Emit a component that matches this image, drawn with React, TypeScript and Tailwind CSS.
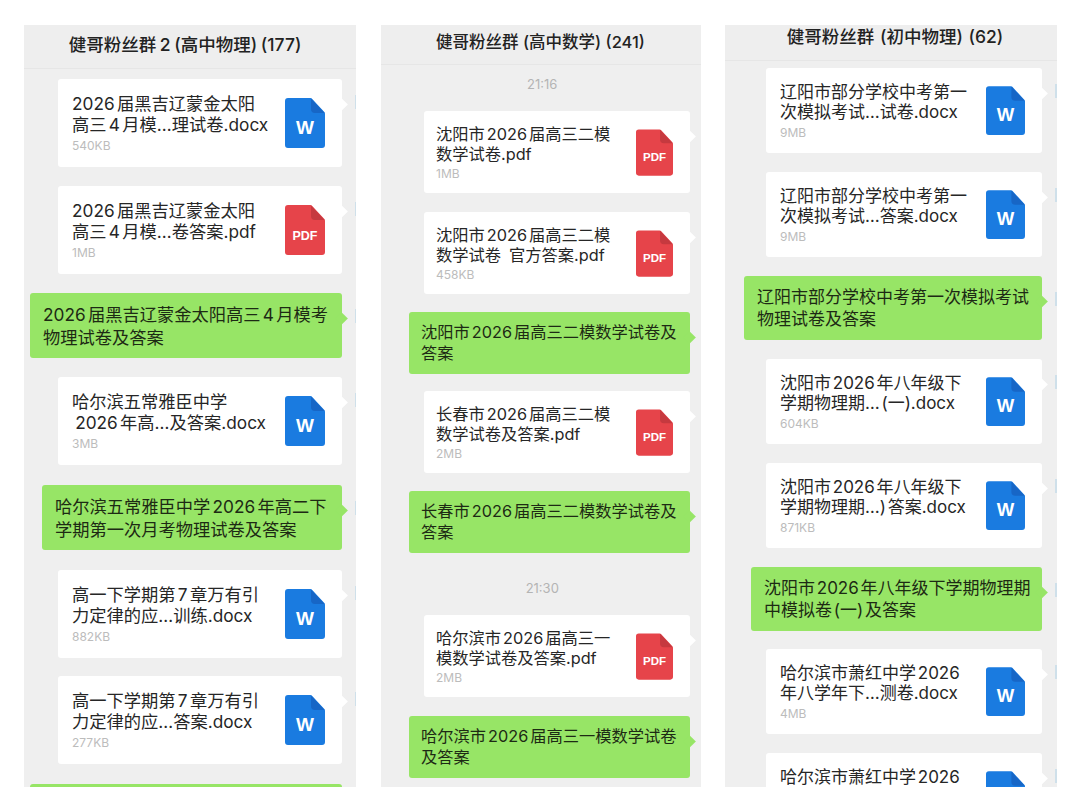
const FONT = "font-['Inter','Noto_Sans_CJK_SC',sans-serif]";

type Item =
  | { kind: "file"; lines: string[]; size: string; icon: "word" | "pdf"; mt: string; textHeight?: string }
  | { kind: "text"; lines: string[]; width: string; mt: string }
  | { kind: "time"; label: string; mt: string };

interface PanelStyle {
  width: string;
  headerHeight: string;
  titleSize: string;
  listPad: string;
  fileClass: string;
  fileWidth: string;
  fileText: string;
  sizeMt: string;
  textClass: string;
  iconClass: string;
}

function DocIcon({ type, className }: { type: "word" | "pdf"; className: string }) {
  const isWord = type === "word";
  return (
    <svg viewBox="0 0 40 50" className={className}>
      <path
        d="M3 0H25.5a2 2 0 0 1 1.5.7L39.3 14a2.5 2.5 0 0 1 .7 1.7V47a3 3 0 0 1-3 3H3a3 3 0 0 1-3-3V3a3 3 0 0 1 3-3Z"
        fill={isWord ? "#1a7be0" : "#e6444a"}
      />
      <path d="M26 .5L39.6 15H30a4 4 0 0 1-4-4Z" fill={isWord ? "#1766c6" : "#c6393f"} />
      <text
        x="20"
        y={isWord ? 36 : 34.5}
        textAnchor="middle"
        fill="#fff"
        fontFamily="Liberation Sans, sans-serif"
        fontWeight="700"
        fontSize={isWord ? 19 : 12.5}
      >
        {isWord ? "W" : "PDF"}
      </text>
    </svg>
  );
}

function Tail({ color }: { color: string }) {
  return (
    <>
      <div className={`absolute right-[-4px] top-[21px] h-[9px] w-[9px] rotate-45 ${color}`} />
      <div className="absolute right-[-15px] top-[16px] h-[14px] w-[2px] bg-[#cfe0ea]" />
    </>
  );
}

function Panel({ title, style, items }: { title: string; style: PanelStyle; items: Item[] }) {
  return (
    <div className={`h-[762px] shrink-0 overflow-hidden bg-[#efefef] ${style.width}`}>
      <div
        className={`flex items-center justify-center border-b border-[#e6e6e6] bg-[#eeeeee] font-medium text-[#222] ${style.headerHeight} ${style.titleSize}`}
      >
        {title}
      </div>
      <div className={`flex flex-col items-end ${style.listPad}`}>
        {items.map((item, i) => {
          if (item.kind === "time") {
            return (
              <div key={i} className={`w-full pl-[14px] text-center text-[13px] leading-[18px] text-[#b4b4b4] ${item.mt}`}>
                {item.label}
              </div>
            );
          }
          if (item.kind === "text") {
            return (
              <div
                key={i}
                className={`relative rounded-[3px] bg-[#97e566] text-[#1d2a14] ${style.textClass} ${item.width} ${item.mt}`}
              >
                {item.lines.map((line) => (
                  <div key={line} className="whitespace-nowrap">{line}</div>
                ))}
                <Tail color="bg-[#97e566]" />
              </div>
            );
          }
          return (
            <div
              key={i}
              className={`relative flex items-center justify-between rounded-[3px] bg-white pr-[17px] ${style.fileClass} ${style.fileWidth} ${item.mt}`}
            >
              <div className={`text-[#262626] ${style.fileText} ${item.textHeight ?? ""}`}>
                {item.lines.map((line) => (
                  <div key={line} className="whitespace-nowrap">{line}</div>
                ))}
                {item.size && (
                  <div className={`text-[12px] leading-[14px] text-[#bcbcbc] ${style.sizeMt}`}>{item.size}</div>
                )}
              </div>
              <DocIcon type={item.icon} className={style.iconClass} />
              <Tail color="bg-white" />
            </div>
          );
        })}
      </div>
    </div>
  );
}

const first: PanelStyle = {
  width: "w-[332px]",
  headerHeight: "h-[44px] pb-[2px] pr-[10px] [word-spacing:-1px]",
  titleSize: "text-[17.5px]",
  listPad: "pr-[14px] [word-spacing:-2.5px]",
  fileClass: "h-[88px] pl-[14px]",
  fileWidth: "w-[284px]",
  fileText: "text-[17.25px] leading-[21px]",
  sizeMt: "mt-[4px]",
  textClass: "py-[9.5px] pl-[13px] text-[17.25px] leading-[23px]",
  iconClass: "h-[50px] w-[40px] shrink-0",
};

const second: PanelStyle = {
  width: "w-[320px]",
  headerHeight: "h-[40px] pb-[5px]",
  titleSize: "text-[16.5px]",
  listPad: "pr-[10.5px] [word-spacing:-2.5px]",
  fileClass: "h-[82px] pl-[12px]",
  fileWidth: "w-[266px]",
  fileText: "text-[16.25px] leading-[20px]",
  sizeMt: "mt-[3px]",
  textClass: "py-[10px] pl-[12px] text-[16.25px] leading-[21px]",
  iconClass: "h-[47px] w-[37px] shrink-0",
};

const third: PanelStyle = {
  width: "w-[332px]",
  headerHeight: "h-[36px] pb-[10px] pl-[8px] [word-spacing:1px]",
  titleSize: "text-[17.5px]",
  listPad: "pr-[15px] [word-spacing:-3px]",
  fileClass: "h-[85px] pl-[14px]",
  fileWidth: "w-[276px]",
  fileText: "text-[17px] leading-[20px]",
  sizeMt: "mt-[4px]",
  textClass: "py-[10px] pl-[13px] text-[17px] leading-[22px]",
  iconClass: "h-[49px] w-[39px] shrink-0",
};

const firstItems: Item[] = [
  { kind: "file", lines: ["2026 届黑吉辽蒙金太阳", "高三 4 月模…理试卷.docx"], size: "540KB", icon: "word", mt: "mt-[10px]" },
  { kind: "file", lines: ["2026 届黑吉辽蒙金太阳", "高三 4 月模…卷答案.pdf"], size: "1MB", icon: "pdf", mt: "mt-[19px]" },
  { kind: "text", lines: ["2026 届黑吉辽蒙金太阳高三 4 月模考", "物理试卷及答案"], width: "w-[312px]", mt: "mt-[19px]" },
  { kind: "file", lines: ["哈尔滨五常雅臣中学", "\u20092026 年高…及答案.docx"], size: "3MB", icon: "word", mt: "mt-[19px]" },
  { kind: "text", lines: ["哈尔滨五常雅臣中学 2026 年高二下", "学期第一次月考物理试卷及答案"], width: "w-[300px]", mt: "mt-[20px]" },
  { kind: "file", lines: ["高一下学期第 7 章万有引", "力定律的应…训练.docx"], size: "882KB", icon: "word", mt: "mt-[20px]" },
  { kind: "file", lines: ["高一下学期第 7 章万有引", "力定律的应…答案.docx"], size: "277KB", icon: "word", mt: "mt-[18px]" },
  { kind: "text", lines: [], width: "w-[312px]", mt: "mt-[20px]" },
];

const secondItems: Item[] = [
  { kind: "time", label: "21:16", mt: "mt-[10px]" },
  { kind: "file", lines: ["沈阳市 2026 届高三二模", "数学试卷.pdf"], size: "1MB", icon: "pdf", mt: "mt-[18px]" },
  { kind: "file", lines: ["沈阳市 2026 届高三二模", "数学试卷\u2002官方答案.pdf"], size: "458KB", icon: "pdf", mt: "mt-[19px]" },
  { kind: "text", lines: ["沈阳市 2026 届高三二模数学试卷及", "答案"], width: "w-[281px]", mt: "mt-[18px]" },
  { kind: "file", lines: ["长春市 2026 届高三二模", "数学试卷及答案.pdf"], size: "2MB", icon: "pdf", mt: "mt-[17px]" },
  { kind: "text", lines: ["长春市 2026 届高三二模数学试卷及", "答案"], width: "w-[281px]", mt: "mt-[18px]" },
  { kind: "time", label: "21:30", mt: "mt-[26px]" },
  { kind: "file", lines: ["哈尔滨市 2026 届高三一", "模数学试卷及答案.pdf"], size: "2MB", icon: "pdf", mt: "mt-[18px]" },
  { kind: "text", lines: ["哈尔滨市 2026 届高三一模数学试卷", "及答案"], width: "w-[281px]", mt: "mt-[19px]" },
];

const thirdItems: Item[] = [
  { kind: "file", lines: ["辽阳市部分学校中考第一", "次模拟考试…试卷.docx"], size: "9MB", icon: "word", mt: "mt-[7px]" },
  { kind: "file", lines: ["辽阳市部分学校中考第一", "次模拟考试…答案.docx"], size: "9MB", icon: "word", mt: "mt-[19px]" },
  { kind: "text", lines: ["辽阳市部分学校中考第一次模拟考试", "物理试卷及答案"], width: "w-[298px]", mt: "mt-[19px]" },
  { kind: "file", lines: ["沈阳市 2026 年八年级下", "学期物理期… (一).docx"], size: "604KB", icon: "word", mt: "mt-[19px]" },
  { kind: "file", lines: ["沈阳市 2026 年八年级下", "学期物理期…) 答案.docx"], size: "871KB", icon: "word", mt: "mt-[19px]" },
  { kind: "text", lines: ["沈阳市 2026 年八年级下学期物理期", "中模拟卷 (一) 及答案"], width: "w-[291px]", mt: "mt-[19px]" },
  { kind: "file", lines: ["哈尔滨市萧红中学 2026", "年八学年下…测卷.docx"], size: "4MB", icon: "word", mt: "mt-[18px]" },
  // only the first line of this card is above the bottom edge of the shot
  { kind: "file", lines: ["哈尔滨市萧红中学 2026"], size: "", icon: "word", mt: "mt-[19px]", textHeight: "h-[58px]" },
];

export default function App() {
  return (
    <div className={`flex h-[810px] w-[1080px] gap-[24.5px] overflow-hidden bg-white pl-[24px] pt-[25px] ${FONT}`}>
      <Panel title="健哥粉丝群 2 (高中物理) (177)" style={first} items={firstItems} />
      <Panel title="健哥粉丝群 (高中数学) (241)" style={second} items={secondItems} />
      <Panel title="健哥粉丝群 (初中物理) (62)" style={third} items={thirdItems} />
    </div>
  );
}
